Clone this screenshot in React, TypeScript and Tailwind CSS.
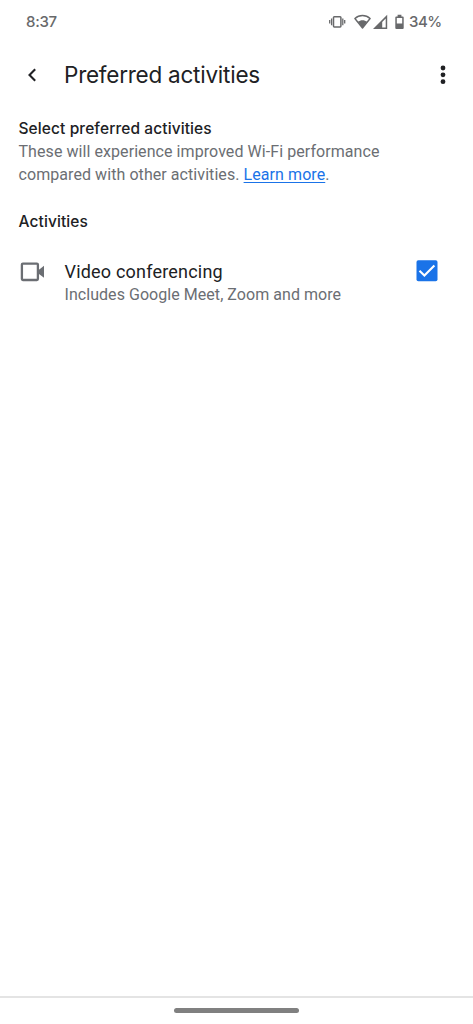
import { useState } from 'react';

const activities = [
  {
    id: 'video',
    title: 'Video conferencing',
    description: 'Includes Google Meet, Zoom and more',
  },
];

export default function App() {
  return (
    <div className="flex h-screen w-full flex-col overflow-hidden bg-white font-['Roboto',sans-serif] text-[#202124]">
      <StatusBar />
      <Header />
      <main className="flex-1 pl-[18.5px] pr-[35px] pt-[18px]">
        <h2 className="whitespace-nowrap font-['Inter',sans-serif] text-[15.5px] font-medium leading-[23px] tracking-[0.1px]">
          Select preferred activities
        </h2>
        <p className="whitespace-nowrap text-[16px] leading-[23px] tracking-[0.07px] text-[#6b6e73]">
          These will experience improved Wi-Fi performance
          <br />
          compared with other activities.{' '}
          <a href="#" className="text-[#1a73e8] underline underline-offset-2">
            Learn more
          </a>
          .
        </p>
        <h2 className="mt-6 font-['Inter',sans-serif] text-[15.5px] font-medium leading-[23px] tracking-[0.1px]">
          Activities
        </h2>
        <ul className="mt-[27px]">
          {activities.map((activity) => (
            <ActivityRow key={activity.id} {...activity} />
          ))}
        </ul>
      </main>
      <footer className="flex h-7 justify-center border-t-2 border-[#e4e4e4] pt-[10px]">
        <div className="h-[5px] w-[125px] rounded-full bg-[#808080]" />
      </footer>
    </div>
  );
}

function StatusBar() {
  return (
    <div className="flex h-[43px] shrink-0 items-center justify-between pl-[26px] pr-8 font-['Inter',sans-serif] text-[15px] font-medium text-[#68696b]">
      <span className="pt-0.5 tracking-[-0.3px]">8:37</span>
      <div className="flex items-center">
        <svg width="17" height="16" viewBox="0 0 17 16" fill="none" stroke="currentColor" strokeWidth="1.5">
          <rect x="4.5" y="2.7" width="7.4" height="10.2" rx="0.8" />
          <path d="M2.6 4.4v6.8M.7 6v3.6M13.8 4.4v6.8M15.7 6v3.6" strokeWidth="1.3" />
        </svg>
        <svg className="ml-2" width="17" height="16" viewBox="0 0 17 16" fill="none">
          <path d="M.9 4.5C5.2.4 11.8.4 16.1 4.5L8.5 14Z" stroke="currentColor" strokeWidth="1.4" strokeLinejoin="round" />
          <path d="M3.9 7.7c2.6-2.1 6.6-2.1 9.2 0L8.5 14Z" fill="currentColor" />
        </svg>
        <svg className="ml-0.5" width="15" height="16" viewBox="0 0 15 16">
          <path d="M0 15 14.2.8V15H0Zm9.2-1.5h3.5V4.4L9.2 7.9v5.6Z" fill="currentColor" fillRule="evenodd" />
        </svg>
        <svg className="ml-[7px]" width="9" height="16" viewBox="0 0 9 16">
          <path
            d="M2.6.8h3.8v1.6h1.3q1 0 1 1v10.7q0 1-1 1H1.3q-1 0-1-1V3.4q0-1 1-1h1.3ZM1.8 4v5.6h5.4V4Z"
            fill="currentColor"
            fillRule="evenodd"
          />
        </svg>
        <span className="ml-[5px] w-8 whitespace-nowrap pt-0.5 tracking-[-0.5px]">34%</span>
      </div>
    </div>
  );
}

function Header() {
  return (
    <header className="flex h-14 shrink-0 items-center pb-px pl-[26px] pr-[27px] pt-2">
      <button type="button" aria-label="Back">
        <svg width="12" height="16" viewBox="0 0 12 16" fill="none">
          <path d="m9.2 2.2-5.7 5.8 5.7 5.8" stroke="#202124" strokeWidth="2.1" />
        </svg>
      </button>
      <h1 className="ml-[26px] flex-1 whitespace-nowrap font-['Inter',sans-serif] text-[22.5px] leading-7 tracking-[-0.24px]">
        Preferred activities
      </h1>
      <button type="button" aria-label="More options">
        <svg width="6" height="20" viewBox="0 0 6 20" fill="#202124">
          <circle cx="3" cy="3" r="2.4" />
          <circle cx="3" cy="9.8" r="2.4" />
          <circle cx="3" cy="16.7" r="2.4" />
        </svg>
      </button>
    </header>
  );
}

interface ActivityRowProps {
  title: string;
  description: string;
}

function ActivityRow({ title, description }: ActivityRowProps) {
  const [checked, setChecked] = useState(true);

  return (
    <li className="flex items-start">
      <svg className="ml-px mt-0.5" width="25" height="21" viewBox="0 0 25 21">
        <rect x="1.9" y="1.6" width="16" height="16.4" rx="1" fill="none" stroke="#6b6e73" strokeWidth="2.3" />
        <path d="M18 8.4 24 3.8v12l-6-4.6Z" fill="#6b6e73" />
      </svg>
      <div className="ml-5 flex-1 whitespace-nowrap">
        <div className="text-[18px] leading-[23px] tracking-[0.2px]">{title}</div>
        <div className="text-[16px] leading-[23px] tracking-[0.05px] text-[#6b6e73]">{description}</div>
      </div>
      <button type="button" role="checkbox" aria-checked={checked} aria-label={title} onClick={() => setChecked(!checked)}>
        <svg width="22" height="22" viewBox="0 0 22 22">
          <rect x="0.5" y="0.2" width="21" height="21" rx="1.8" fill={checked ? '#1a73e8' : '#ffffff'} stroke="none" />
          {checked && <path d="m3.5 10.7 4.9 4.8 10-10.1" fill="none" stroke="#ffffff" strokeWidth="2.1" />}
        </svg>
      </button>
    </li>
  );
}
